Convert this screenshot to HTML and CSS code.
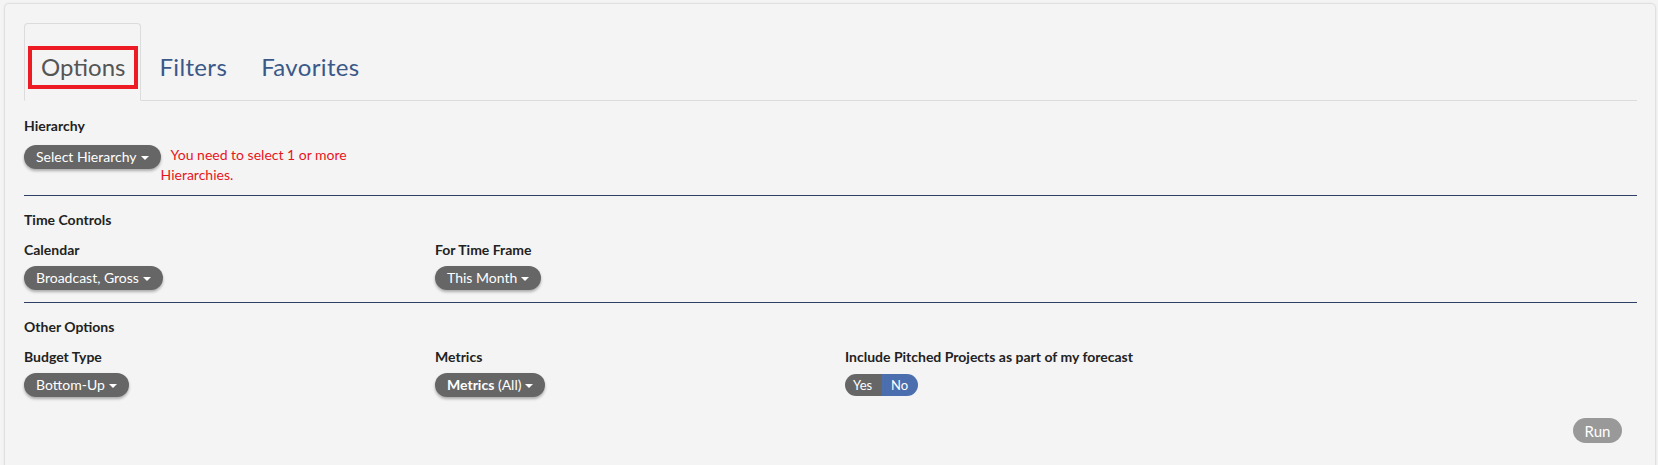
FILE: index.html
```html
<!DOCTYPE html>
<html>
<head>
<meta charset="utf-8">
<link rel="stylesheet" href="styles.css">
</head>
<body>
<div class="panel">
  <ul class="tabs">
    <li class="tab active"><a><span class="tab-label marked">Options</span></a></li>
    <li class="tab"><a><span class="tab-label">Filters</span></a></li>
    <li class="tab"><a><span class="tab-label">Favorites</span></a></li>
  </ul>

  <section class="section first">
    <div class="label label-hier">Hierarchy</div>
    <div class="hier-row">
      <button class="pill">Select Hierarchy<span class="caret"></span></button>
      <div class="error">You need to select 1 or more Hierarchies.</div>
    </div>
  </section>

  <hr class="sep">

  <section class="section">
    <div class="heading">Time Controls</div>
    <div class="grid">
      <div class="field">
        <div class="label">Calendar</div>
        <button class="pill">Broadcast, Gross<span class="caret"></span></button>
      </div>
      <div class="field">
        <div class="label">For Time Frame</div>
        <button class="pill">This Month<span class="caret"></span></button>
      </div>
    </div>
  </section>

  <hr class="sep">

  <section class="section">
    <div class="heading">Other Options</div>
    <div class="grid">
      <div class="field">
        <div class="label">Budget Type</div>
        <button class="pill">Bottom-Up<span class="caret"></span></button>
      </div>
      <div class="field">
        <div class="label">Metrics</div>
        <button class="pill"><b>Metrics</b> (All)<span class="caret"></span></button>
      </div>
      <div class="field">
        <div class="label">Include Pitched Projects as part of my forecast</div>
        <div class="toggle"><span class="opt yes">Yes</span><span class="opt no on">No</span></div>
      </div>
    </div>
  </section>

  <div class="actions">
    <button class="run">Run</button>
  </div>
</div>
</body>
</html>
```

FILE: styles.css
```css
html, body {
  margin: 0;
  padding: 0;
  background: #f4f4f4;
  overflow: hidden;
}
body {
  font-family: Lato, "Open Sans", "Liberation Sans", sans-serif;
  color: #222;
  height: 465px;
}
.panel {
  margin: 3px 2px 0 4px;
  border: 1px solid #e0e0e0;
  border-radius: 5px;
  box-shadow: 0 0 2px rgba(0,0,0,0.08);
  background: #f4f4f4;
  padding: 19px 18px 40px 19px;
}
.tabs {
  list-style: none;
  margin: 0;
  padding: 0;
  display: flex;
  border-bottom: 1px solid #dcdcdc;
}
.tab {
  margin: 0 1px -1px 0;
}
.tab a {
  display: block;
  padding: 22px 2px 11px 3px;
  border: 1px solid transparent;
  border-radius: 4px 4px 0 0;
}
.tab.active a {
  border-color: #dcdcdc #dcdcdc transparent;
  background: #f4f4f4;
}
.tab-label {
  display: inline-block;
  font-size: 24px;
  line-height: 29px;
  padding: 2px 9px 4px;
  border: 4px solid transparent;
  color: #3a5888;
  letter-spacing: 0.35px;
}
.tab.active .tab-label {
  color: #555;
  letter-spacing: 0;
}
.tab-label.marked {
  border-color: #ed1c24;
}
.section.first {
  padding-top: 15px;
}
.section {
  padding-top: 14px;
}
.label, .heading {
  font-size: 14px;
  font-weight: 700;
  line-height: 20px;
  color: #222;
}
.heading {
  margin-bottom: 10px;
}
.label {
  margin-bottom: 6px;
}
.label-hier {
  margin-bottom: 9px;
}
.hier-row {
  display: flex;
  align-items: flex-start;
}
.pill {
  display: inline-block;
  border: 0;
  height: 24px;
  line-height: 24px;
  padding: 0 12px 0 12px;
  border-radius: 12px;
  background: #666;
  color: #fff;
  font-family: inherit;
  font-size: 14px;
  box-shadow: 0 2px 3px rgba(0,0,0,0.3);
  cursor: pointer;
  white-space: nowrap;
}
.pill b {
  font-weight: 700;
}
.caret {
  display: inline-block;
  width: 0;
  height: 0;
  margin-left: 4px;
  vertical-align: middle;
  border-top: 4px solid #fff;
  border-left: 4px solid transparent;
  border-right: 4px solid transparent;
}
.error {
  width: 190px;
  color: #e8141b;
  font-size: 14px;
  line-height: 20px;
  text-indent: 10px;
}
.sep {
  border: 0;
  border-top: 1px solid #2e4066;
  margin: 12px 0 0 0;
}
.section.first + .sep {
  margin-top: 10px;
}
.grid {
  display: grid;
  grid-template-columns: 411px 410px 1fr;
}
.toggle {
  display: inline-flex;
  height: 22px;
  border-radius: 11px;
  overflow: hidden;
  margin-top: 1px;
}
.opt {
  line-height: 22px;
  font-size: 13px;
  color: #fff;
  background: #666;
}
.opt.yes {
  padding: 0 8px 0 8px;
  width: 21px;
}
.opt.no {
  padding: 0 9px 0 9px;
  width: 18px;
}
.opt.on {
  background: #4b6fae;
}
.actions {
  display: flex;
  justify-content: flex-end;
  padding: 21px 15px 0 0;
}
.run {
  border: 0;
  height: 25px;
  width: 49px;
  border-radius: 13px;
  background: #999;
  color: #fff;
  font-family: inherit;
  font-size: 15px;
  padding: 0;
}
```
